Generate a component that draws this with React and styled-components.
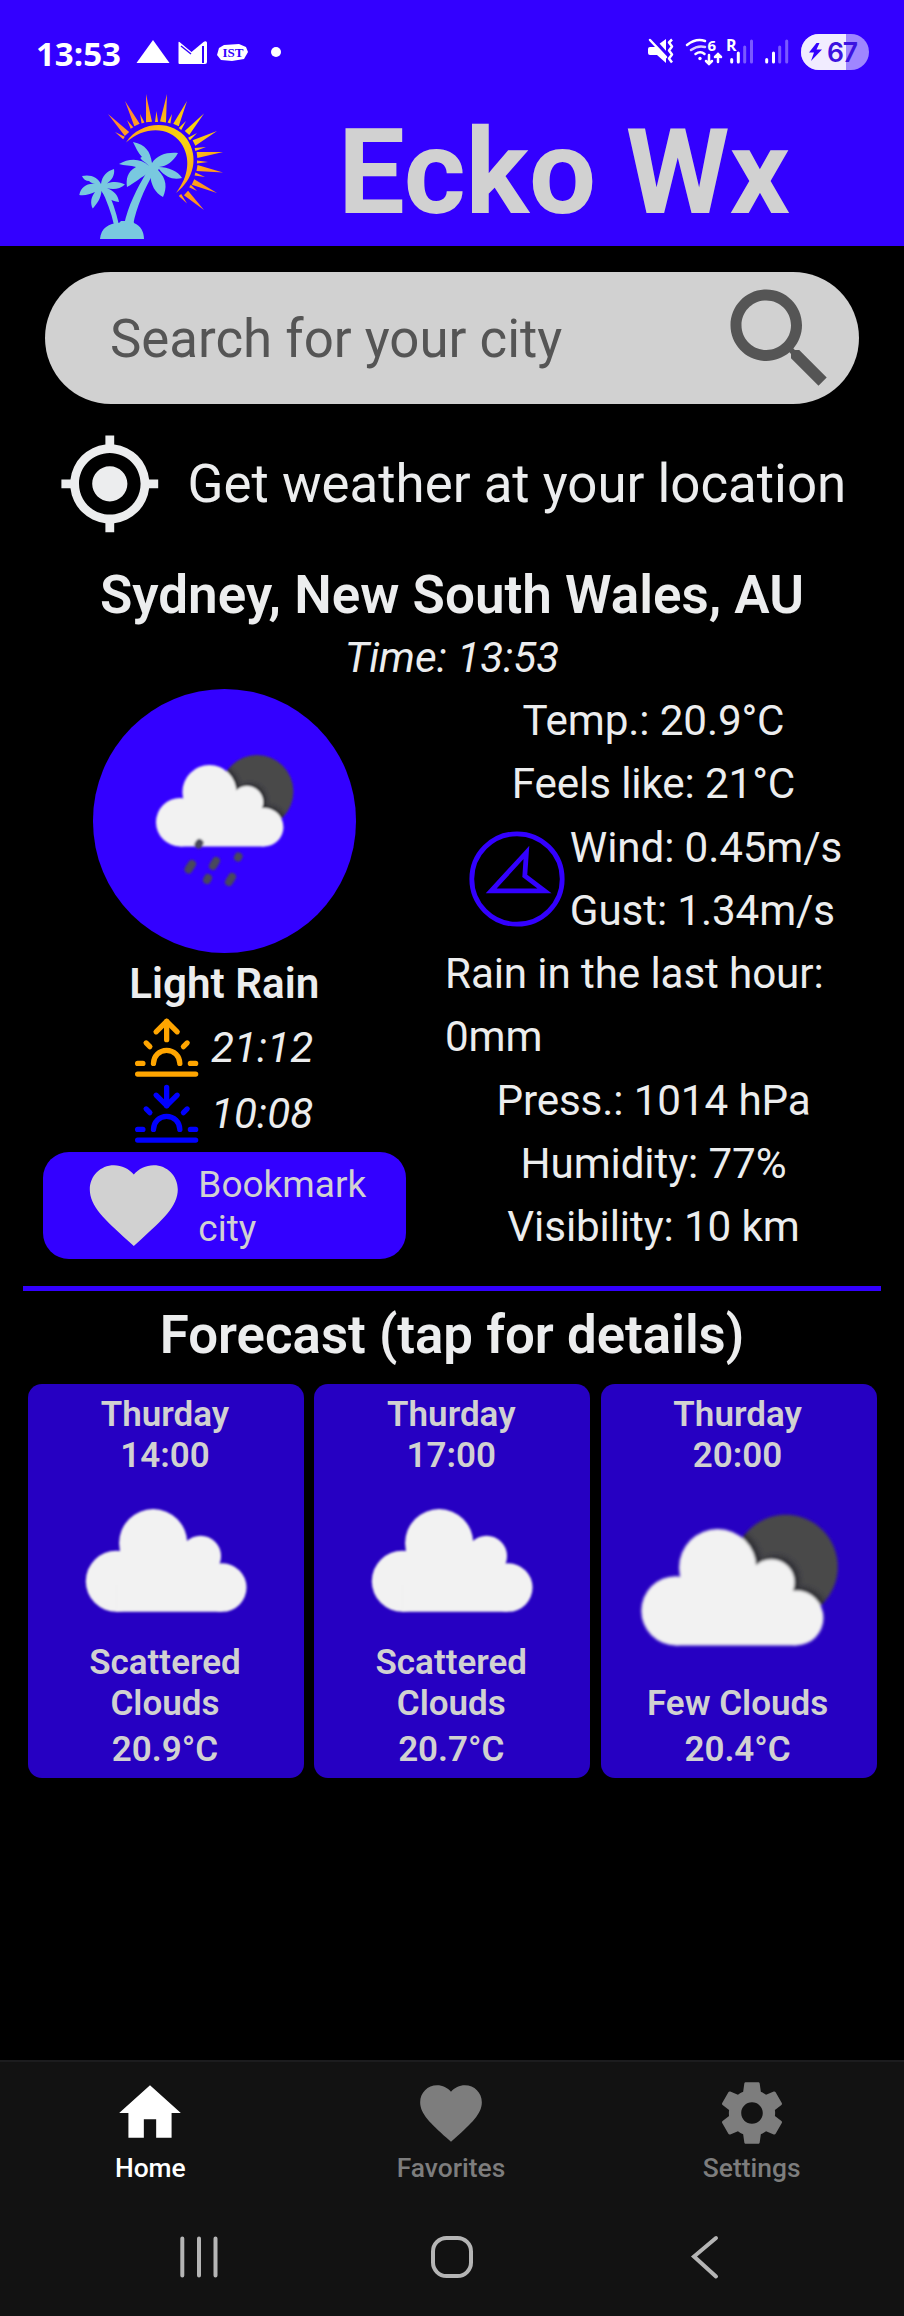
import React from "react";
import styled, { createGlobalStyle } from "styled-components";

const BRAND = "#3300ff";
const SOFT = "#d1d1d1";
const INK = "#ecedee";

const GlobalStyle = createGlobalStyle`
  *, *::before, *::after { box-sizing: border-box; }
  body { margin: 0; background: #000; }
`;

const Screen = styled.div`
  width: 904px;
  height: 2316px;
  display: flex;
  flex-direction: column;
  background: #000;
  color: ${INK};
  font-family: Roboto, "Liberation Sans", sans-serif;
  overflow: hidden;
`;

const Header = styled.header`
  height: 246px;
  flex: none;
  background: ${BRAND};
  display: flex;
  flex-direction: column;
`;

const StatusBar = styled.div`
  height: 92px;
  padding: 12px 35px 0 36px;
  display: flex;
  align-items: center;
  justify-content: space-between;
  color: #fff;
`;

const StatusGroup = styled.div`
  display: flex;
  align-items: center;
  padding-top: 4px;
`;

const Clock = styled.span`
  width: 100px;
  font: 700 33px/40px "Open Sans", sans-serif;
`;

const TitleRow = styled.div`
  height: 154px;
  display: flex;
`;

const Title = styled.h1`
  margin: 0 0 0 98px;
  padding-top: 11px;
  font-size: 118.8px;
  line-height: 139px;
  font-weight: 700;
  color: ${SOFT};
  white-space: nowrap;
`;

const LogoSvg = styled.svg`
  flex: none;
  margin-left: 70px;
  margin-top: -7px;
  width: 170px;
  height: 161px;
`;

const SearchBox = styled.div`
  flex: none;
  width: 814px;
  height: 132px;
  margin: 26px 0 0 45px;
  padding: 2px 13px 0 65px;
  border-radius: 66px;
  background: ${SOFT};
  color: #555;
  display: flex;
  align-items: center;
  justify-content: space-between;
  font-size: 52.8px;
  white-space: nowrap;
`;

const LocateRow = styled.div`
  flex: none;
  height: 106px;
  margin: 27px 0 0 57px;
  display: flex;
  align-items: center;
  gap: 25px;
  font-size: 52.8px;
  white-space: nowrap;
`;

const City = styled.h2`
  flex: none;
  margin: 27px 0 0;
  text-align: center;
  font-size: 53px;
  line-height: 63px;
  font-weight: 600;
  white-space: nowrap;
`;

const LocalTime = styled.p`
  flex: none;
  margin: 0;
  text-align: center;
  font-size: 42.2px;
  line-height: 62px;
  font-style: italic;
`;

const Current = styled.section`
  flex: none;
  height: 577px;
  display: flex;
`;

const Summary = styled.div`
  width: 448.5px;
  display: flex;
  flex-direction: column;
  align-items: center;
`;

const Disc = styled.div`
  flex: none;
  width: 263.5px;
  height: 263.5px;
  padding: 3px 1px 0 0;
  border-radius: 50%;
  background: ${BRAND};
  display: flex;
  align-items: center;
  justify-content: center;
`;

const Condition = styled.div`
  font-size: 42.2px;
  line-height: 62px;
  font-weight: 600;
`;

const SunRow = styled.div`
  height: 66px;
  display: flex;
  align-items: center;
  gap: 12.5px;
  font-size: 42.2px;
  font-style: italic;
`;

const Bookmark = styled.button`
  width: 363px;
  height: 107.5px;
  margin: 5px 0 0;
  padding: 0 0 0 38px;
  border: 0;
  border-radius: 26px;
  background: ${BRAND};
  color: ${SOFT};
  display: flex;
  align-items: center;
  gap: 12px;
  text-align: left;
  font: 400 37px/43.3px Roboto, sans-serif;
`;

const BookmarkLabel = styled.span`
  width: 170px;
  padding-top: 3px;
`;

const Readings = styled.div`
  width: 417px;
  margin-left: -3.5px;
  display: flex;
  flex-direction: column;
  align-items: center;
  font-size: 42.2px;
  line-height: 63.3px;
  letter-spacing: -0.12px;
`;

const WindRow = styled.div`
  display: flex;
  align-items: center;
  gap: 5px;
  padding-left: 4px;
  white-space: nowrap;
`;

const Divider = styled.hr`
  flex: none;
  width: 858px;
  height: 5px;
  margin: 20px 0 0 23px;
  border: 0;
  background: ${BRAND};
`;

const ForecastTitle = styled.h2`
  flex: none;
  margin: 13px 0 0;
  text-align: center;
  font-size: 52.8px;
  line-height: 63px;
  font-weight: 600;
`;

const Cards = styled.div`
  flex: none;
  display: flex;
  gap: 10.3px;
  margin: 17px 0 0 28px;
`;

const Card = styled.article`
  width: 276px;
  height: 394px;
  padding: 10px 41px 2px 39px;
  border-radius: 14px;
  background: #2600c2;
  color: ${SOFT};
  display: flex;
  flex-direction: column;
  align-items: center;
  text-align: center;
  font-size: 35px;
  line-height: 41px;
  font-weight: 600;
`;

const CardIcon = styled.div`
  flex: 1;
  display: flex;
  align-items: center;
  justify-content: center;
  padding-top: ${(p) => p.$drop || 0}px;
  padding-left: ${(p) => p.$shift || 0}px;
`;

const CardTemp = styled.div`
  line-height: 52px;
`;

const CardText = styled.div`
  margin: 0 -30px;
  max-width: 200px;
`;

const BottomBar = styled.nav`
  flex: none;
  height: 256px;
  margin-top: auto;
  border-top: 2px solid #1c1c1e;
  background: #121212;
`;

const Tabs = styled.div`
  display: flex;
  height: 140px;
  margin-right: 2px;
`;

const Tab = styled.div`
  flex: 1;
  padding-top: 14px;
  display: flex;
  flex-direction: column;
  align-items: center;
  color: ${(p) => (p.$active ? "#fff" : "#7d7d7d")};
  font-size: 26.4px;
  line-height: 32px;
  font-weight: 500;
  gap: 2px;
`;

const SystemNav = styled.div`
  height: 114px;
  padding: 10px 177px 0;
  display: flex;
  justify-content: space-between;
`;

const PATHS = {
  search:
    "M15.5 14h-.79l-.28-.27C15.41 12.59 16 11.11 16 9.5 16 5.91 13.09 3 9.5 3S3 5.91 3 9.5 5.91 16 9.5 16c1.61 0 3.09-.59 4.23-1.57l.27.28v.79l5 4.99L20.49 19l-4.99-5zm-6 0C7.01 14 5 11.99 5 9.5S7.01 5 9.5 5 14 7.01 14 9.5 11.99 14 9.5 14z",
  locate:
    "M12 8c-2.21 0-4 1.79-4 4s1.79 4 4 4 4-1.79 4-4-1.79-4-4-4zm8.94 3A8.994 8.994 0 0 0 13 3.06V1h-2v2.06A8.994 8.994 0 0 0 3.06 11H1v2h2.06A8.994 8.994 0 0 0 11 20.94V23h2v-2.06A8.994 8.994 0 0 0 20.94 13H23v-2h-2.06zM12 19c-3.87 0-7-3.13-7-7s3.13-7 7-7 7 3.13 7 7-3.13 7-7 7z",
  heart:
    "M12 21.35l-1.45-1.32C5.4 15.36 2 12.28 2 8.5 2 5.42 4.42 3 7.5 3c1.74 0 3.41.81 4.5 2.09C13.09 3.81 14.76 3 16.5 3 19.58 3 22 5.42 22 8.5c0 3.78-3.4 6.86-8.55 11.54L12 21.35z",
  home: "M10 20v-6h4v6h5v-8h3L12 3 2 12h3v8z",
  settings:
    "M19.43 12.98c.04-.32.07-.64.07-.98s-.03-.66-.07-.98l2.11-1.65c.19-.15.24-.42.12-.64l-2-3.46c-.12-.22-.39-.3-.61-.22l-2.49 1c-.52-.4-1.08-.73-1.69-.98l-.38-2.65C14.46 2.18 14.25 2 14 2h-4c-.25 0-.46.18-.49.42l-.38 2.65c-.61.25-1.17.59-1.69.98l-2.49-1c-.23-.09-.49 0-.61.22l-2 3.46c-.13.22-.07.49.12.64l2.11 1.65c-.04.32-.07.65-.07.98s.03.66.07.98l-2.11 1.65c-.19.15-.24.42-.12.64l2 3.46c.12.22.39.3.61.22l2.49-1c.52.4 1.08.73 1.69.98l.38 2.65c.03.24.24.42.49.42h4c.25 0 .46-.18.49-.42l.38-2.65c.61-.25 1.17-.59 1.69-.98l2.49 1c.23.09.49 0 .61-.22l2-3.46c.12-.22.07-.49-.12-.64l-2.11-1.65zM12 15.5c-1.93 0-3.5-1.57-3.5-3.5s1.57-3.5 3.5-3.5 3.5 1.57 3.5 3.5-1.57 3.5-3.5 3.5z",
};

const IconSvg = styled.svg`
  flex: none;
  display: block;
`;

function Glyph({ name, size, color = "currentColor" }) {
  return (
    <IconSvg width={size} height={size} viewBox="0 0 24 24" fill={color}>
      <path d={PATHS[name]} />
    </IconSvg>
  );
}

function SunIcon({ down, color }) {
  return (
    <IconSvg width="63.3" height="63.3" viewBox="0 0 24 24" fill="none" stroke={color} strokeWidth="2" strokeLinecap="round" strokeLinejoin="round">
      <path d="M17 18a5 5 0 0 0-10 0M12 2v7M4.22 10.22l1.42 1.42M1 18h2M21 18h2M18.36 11.64l1.42-1.42M23 22H1" />
      <path d={down ? "M16 5l-4 4-4-4" : "M8 6l4-4 4 4"} />
    </IconSvg>
  );
}

function CloudArt({ scale, moon, rain }) {
  const top = moon ? -14 : -4;
  const w = moon ? 142 : 134;
  const h = (rain ? 128 : 86) - top;
  return (
    <IconSvg width={w * scale} height={h * scale} viewBox={`-3 ${top} ${w} ${h}`}>
      <defs>
        <filter id="soft" x="-5%" y="-5%" width="110%" height="110%">
          <feGaussianBlur stdDeviation="1" />
        </filter>
        <filter id="shade" x="-20%" y="-20%" width="140%" height="140%">
          <feGaussianBlur stdDeviation="2" />
        </filter>
        <clipPath id="moon">
          <circle cx="101" cy="26.5" r="36.4" />
        </clipPath>
        <g id="cloud">
          <circle cx="53.4" cy="27" r="27" />
          <circle cx="24.2" cy="57.2" r="24.2" />
          <circle cx="91" cy="37.3" r="16.2" />
          <circle cx="108.2" cy="62.2" r="19.2" />
          <path d="M24 81.4V50L40 30H80L95 40 108 60V81.4Z" />
        </g>
      </defs>
      <g filter="url(#soft)">
        {moon && <circle cx="101" cy="26.5" r="36.4" fill="#48484a" />}
        {moon && (
          <g clipPath="url(#moon)">
            <use href="#cloud" fill="#2c2c30" filter="url(#shade)" transform="translate(3 -2)" />
          </g>
        )}
        <use href="#cloud" fill="#f2f2f2" />
        {rain && (
          <g stroke="#48485c" strokeWidth="8" strokeLinecap="round">
            <path d="M43.500 78l-1 1.500M36 99l-3.500 5.500M60 96l-3 5M82.500 91.500l-.5 1" />
            <path d="M52 113l-1 2M76 112l-3 5" />
          </g>
        )}
      </g>
    </IconSvg>
  );
}

function Compass() {
  return (
    <IconSvg width="96" height="96" viewBox="0 0 96 96" fill="none" stroke={BRAND} strokeWidth="4.8">
      <circle cx="48" cy="48" r="45.2" />
      <path d="M57.4 21.500L22.200 59.800H75.500L55.800 44.800Z" />
    </IconSvg>
  );
}

const LONG_RAYS = [
  [38, 29, 57, 49], [55, 16, 67, 40], [76, 9, 79, 37], [97, 9, 93, 37], [117, 16, 106, 40], [134, 28.5, 117, 48],
  [147, 46, 124, 58], [153, 67, 127, 70], [153, 87.5, 127, 83], [147, 108, 123, 97], [134, 125, 116, 108],
];
const SHORT_RAYS = [
  [45, 47, 54, 53], [57, 35, 62, 43], [70, 29, 73, 38], [86.5, 26, 86.5, 37], [102, 29, 99, 38], [116, 36, 110, 44],
  [127, 48, 119, 54], [136, 62, 125, 64.5], [138, 77, 127, 77], [135, 92, 125, 89], [127, 106, 120, 101], [117, 118.5, 110, 110],
];

function spike([x1, y1, x2, y2], half) {
  const dx = x2 - x1;
  const dy = y2 - y1;
  const n = Math.hypot(dx, dy);
  const ox = (-dy / n) * half;
  const oy = (dx / n) * half;
  return `M${x1} ${y1}L${x2 + ox} ${y2 + oy}L${x2 - ox} ${y2 - oy}Z`;
}

const TALL_FRONDS = "M82 78C80 66 76 60 63 57C66 63 68 68 72 72C67 73 76 77 79 81C71 73 59 73 49 79C54 81 61 80 66 82C57 87 56 94 57 102C66 97 71 92 79 88L80 89C81 100 85 108 93 112C97 103 97 94 88 85L89 84C96 93 104 95 112 93C108 86 98 82 89 82C97 81 103 77 108 68C97 67 87 70 82 78Z";
const SHORT_FRONDS = "M31 99C28 92 20 89 12 91C13 94 16 96 19 96C21 98 23 98 25 99C17 98 11 102 9.300 110C15 111 20 109 25 107C21 112 20 118 22.700 123.500C27 119 31 113 31.500 106C35 112 41 116 49 117C48 110 44 106 37 103C43 105 50 104 55 99.500C50 97 44 96 37 98.500C42 95 45 90 44 84C37 86 32 91 31 99Z";

function Logo() {
  return (
    <LogoSvg viewBox="0 0 170 161">
      <defs>
        <linearGradient id="sun" gradientUnits="userSpaceOnUse" x1="50" y1="40" x2="118" y2="115">
          <stop offset="0" stopColor="#ff8c2e" />
          <stop offset="0.3" stopColor="#f9c310" />
          <stop offset="0.55" stopColor="#f6d411" />
          <stop offset="1" stopColor="#ff941f" />
        </linearGradient>
      </defs>
      <g fill="url(#sun)">
        <path d="M56 57.500C70 36 102 34 117 54C129 72 124 94 106 108C119 91 121 73 111 58C99 41 74 41 56 57.500Z" />
        <path d={LONG_RAYS.map((r) => spike(r, 3)).join("")} />
        <path d={SHORT_RAYS.map((r) => spike(r, 1.5)).join("")} />
      </g>
      <g fill="#79c9df">
        <path d={TALL_FRONDS} />
        <path d={SHORT_FRONDS} />
        <path d="M77 87L84 87C73 107 67 121 63 140H54C58 121 67 103 77 87ZM31 104L36 103C42 114 46 127 49 140H44C41 127 37 116 31 104Z" />
        <path d="M30 154C31 143 39 138 49 138L51 136H63L64 138C71 141 74 147 74 154Z" />
      </g>
    </LogoSvg>
  );
}

function LeftStatusIcons() {
  return (
    <IconSvg width="148" height="30" viewBox="0 0 148 30" fill="#fff">
      <path d="M17 1L33.500 24H.5Z" />
      <path d="M42.500 3.500q0-1 1-.5l12 10 12-10q2.500-1.500 3.500.5v19.500q0 2-2 2H43.500q-1 0-1-1z" />
      <path d="M45 7l10 8" stroke={BRAND} strokeWidth="1.500" />
      <path d="M67 7v17" stroke={BRAND} strokeWidth="2" />
      <path d="M83 9l5-3 15-1 7 3 2 5-4 7-12 2-11-1-4-5z" />
      <text x="97" y="18" textAnchor="middle" fontFamily="Liberation Serif" fontWeight="700" fontSize="13" fill={BRAND}>IST</text>
      <circle cx="140" cy="13" r="5" />
    </IconSvg>
  );
}

function RightStatusIcons() {
  return (
    <IconSvg width="222" height="38" viewBox="0 0 222 38" fill="#fff">
      <path d="M1 16q0-2 2-2h5l11-8v24l-9-8H3q-2 0-2-2z" />
      <path d="M5 5l16 18" stroke={BRAND} strokeWidth="4" />
      <path d="M3 7l16 17" stroke="#fff" strokeWidth="2.500" strokeLinecap="round" />
      <path d="M25 6.500l-3 3 3 4-3 4 3 4-3 4 3 4" fill="none" stroke="#fff" strokeWidth="2.500" strokeLinejoin="round" />
      <g fill="none" stroke="#fff" strokeWidth="2.500" strokeLinecap="round">
        <path d="M40 12q9-7 18-4" />
        <path d="M44 17q7-5 14-3" opacity=".8" />
        <path d="M48.500 21q5-3.500 9 0" />
        <path d="M62 22v9m-3-3l3 3 3-3M71 29v-8m-3 3l3-3 3 3" />
      </g>
      <circle cx="53" cy="25.500" r="1.700" />
      <text x="60.500" y="17.500" fontFamily="Open Sans" fontWeight="700" fontSize="15">6</text>
      <text x="79" y="18" fontFamily="Open Sans" fontWeight="700" fontSize="16">R</text>
      <g stroke="#fff" strokeWidth="3" strokeLinecap="round">
        <path d="M84.700 26.500v2.500M91.300 20v9M119.700 26.500v2.500M126.500 20v9" />
        <path d="M97.700 14v15M104.500 8v21M132.700 14v15M139.700 8v21" opacity=".35" />
      </g>
      <clipPath id="charge"><rect x="154" y="1" width="68" height="36" rx="18" /></clipPath>
      <g clipPath="url(#charge)">
        <rect x="154" y="1" width="68" height="36" fill="#9f86ff" />
        <rect x="154" y="1" width="45" height="36" fill="#f1ecff" />
      </g>
      <path d="M169.500 10l-7.500 9.500h5l-3 8.500 11-11.500h-5.500l3-6.500z" fill={BRAND} />
      <text x="180" y="28.500" fontFamily="Inter" fontWeight="600" fontSize="26.500" letterSpacing="-1.200" fill="#3c12e0">67</text>
    </IconSvg>
  );
}

const FORECAST = [
  { time: "14:00", text: "Scattered Clouds", temp: "20.9°C" },
  { time: "17:00", text: "Scattered Clouds", temp: "20.7°C" },
  { time: "20:00", text: "Few Clouds", temp: "20.4°C", moon: true },
];

export default function App() {
  return (
    <Screen>
      <GlobalStyle />
      <Header>
        <StatusBar>
          <StatusGroup>
            <Clock>13:53</Clock>
            <LeftStatusIcons />
          </StatusGroup>
          <RightStatusIcons />
        </StatusBar>
        <TitleRow>
          <Logo />
          <Title>Ecko Wx</Title>
        </TitleRow>
      </Header>

      <SearchBox>
        <span>Search for your city</span>
        <Glyph name="search" size={132} />
      </SearchBox>
      <LocateRow>
        <Glyph name="locate" size={105.6} />
        <span>Get weather at your location</span>
      </LocateRow>

      <City>Sydney, New South Wales, AU</City>
      <LocalTime>Time: 13:53</LocalTime>

      <Current>
        <Summary>
          <Disc>
            <CloudArt scale={1} moon rain />
          </Disc>
          <Condition>Light Rain</Condition>
          <SunRow>
            <SunIcon color="#ffa500" />
            <span>21:12</span>
          </SunRow>
          <SunRow>
            <SunIcon color="#0000ff" down />
            <span>10:08</span>
          </SunRow>
          <Bookmark>
            <Glyph name="heart" size={105.6} />
            <BookmarkLabel>Bookmark city</BookmarkLabel>
          </Bookmark>
        </Summary>
        <Readings>
          <div>Temp.: 20.9°C</div>
          <div>Feels like: 21°C</div>
          <WindRow>
            <Compass />
            <div>
              <div>Wind: 0.45m/s</div>
              <div>Gust: 1.34m/s</div>
            </div>
          </WindRow>
          <div>Rain in the last hour: 0mm</div>
          <div>Press.: 1014 hPa</div>
          <div>Humidity: 77%</div>
          <div>Visibility: 10 km</div>
        </Readings>
      </Current>

      <Divider />
      <ForecastTitle>Forecast (tap for details)</ForecastTitle>
      <Cards>
        {FORECAST.map((f) => (
          <Card key={f.time}>
            <div>Thurday</div>
            <div>{f.time}</div>
            <CardIcon $drop={f.moon ? 2 : 4} $shift={f.moon ? 1 : 3}>
              <CloudArt scale={f.moon ? 1.43 : 1.262} moon={f.moon} />
            </CardIcon>
            <CardText>{f.text}</CardText>
            <CardTemp>{f.temp}</CardTemp>
          </Card>
        ))}
      </Cards>

      <BottomBar>
        <Tabs>
          <Tab $active>
            <Glyph name="home" size={74} />
            Home
          </Tab>
          <Tab>
            <Glyph name="heart" size={74} />
            Favorites
          </Tab>
          <Tab>
            <Glyph name="settings" size={74} />
            Settings
          </Tab>
        </Tabs>
        <SystemNav>
          <IconSvg width="44" height="90" viewBox="0 0 44 90" stroke="#b5b5b5" strokeWidth="4" strokeLinecap="round">
            <path d="M5.300 26.500v37M22 26.500v37M38.500 26.500v37" />
          </IconSvg>
          <IconSvg width="44" height="90" viewBox="0 0 44 90" fill="none" stroke="#b5b5b5" strokeWidth="4">
            <rect x="3" y="26" width="38" height="38" rx="13.500" />
          </IconSvg>
          <IconSvg width="44" height="90" viewBox="0 0 44 90" fill="none" stroke="#b5b5b5" strokeWidth="4" strokeLinecap="round">
            <path d="M33 26L11 44.500 33 64.500" />
          </IconSvg>
        </SystemNav>
      </BottomBar>
    </Screen>
  );
}
